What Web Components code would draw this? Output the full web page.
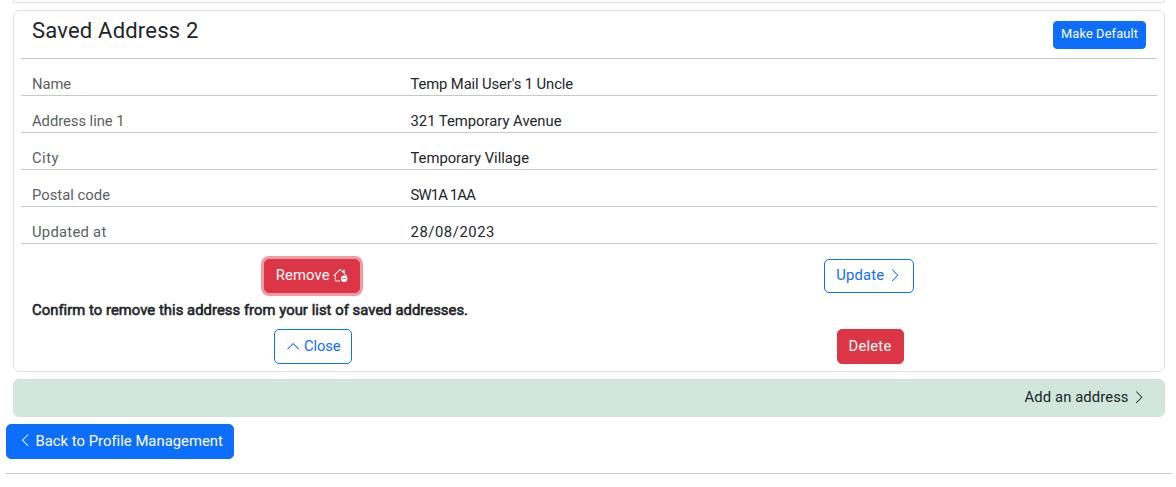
<!DOCTYPE html>
<html lang="en">
<head>
<meta charset="utf-8">
<title>Saved addresses</title>
<style>
body{margin:0;background:#fff;color:#212529;font:14.8px/22px Roboto,"Liberation Sans",sans-serif;overflow:hidden}
</style>
</head>
<body>
<address-page></address-page>
<script>
const define = (name, html, setup) => customElements.define(name, class extends HTMLElement {
  connectedCallback() {
    if (this.shadowRoot) return;
    this.attachShadow({mode: 'open'}).innerHTML = html;
    if (setup) setup(this, this.shadowRoot);
  }
});

// A label spaced out to a given measure in pixels.
define('fit-text', `<style>:host{display:inline-block;white-space:nowrap}span{display:inline-block}</style><span><slot></slot></span>`, (host, root) => {
  const span = root.querySelector('span');
  const measure = +host.getAttribute('measure');
  host.style.width = measure + 'px';
  span.style.letterSpacing = (measure - span.getBoundingClientRect().width) / host.textContent.length + 'px';
});

const ICONS = {
  right: '<path fill-rule="evenodd" d="M4.646 1.646a.5.5 0 0 1 .708 0l6 6a.5.5 0 0 1 0 .708l-6 6a.5.5 0 0 1-.708-.708L10.293 8 4.646 2.354a.5.5 0 0 1 0-.708z"/>',
  left: '<path fill-rule="evenodd" d="M11.354 1.646a.5.5 0 0 1 0 .708L5.707 8l5.647 5.646a.5.5 0 0 1-.708.708l-6-6a.5.5 0 0 1 0-.708l6-6a.5.5 0 0 1 .708 0z"/>',
  up: '<path fill-rule="evenodd" d="M7.646 4.646a.5.5 0 0 1 .708 0l6 6a.5.5 0 0 1-.708.708L8 5.707l-5.646 5.647a.5.5 0 0 1-.708-.708l6-6z"/>',
  house: '<circle cx="12.4" cy="12" r="3.6"/><path d="M11 11.7h2.8" stroke="#dc3545" stroke-width=".9" stroke-linecap="round"/><path d="M7.293 1.5a1 1 0 0 1 1.414 0L11 3.793V2.5a.5.5 0 0 1 .5-.5h1a.5.5 0 0 1 .5.5v3.293l2.354 2.353a.5.5 0 0 1-.708.708L8 2.207l-5 5V13.5a.5.5 0 0 0 .5.5h4a.5.5 0 0 1 0 1h-4A1.5 1.5 0 0 1 2 13.5V8.207l-.646.647a.5.5 0 1 1-.708-.708L7.293 1.5Z"/>'
};
define('line-icon', `<style>:host{display:block;width:14.4px;height:14.4px;flex:none}svg{display:block;width:100%;height:100%}</style><svg viewBox="0 0 16 16" fill="currentColor"></svg>`,
  (host, root) => { root.querySelector('svg').innerHTML = ICONS[host.getAttribute('name')]; });

define('action-button', `<style>
:host{display:inline-flex;box-sizing:border-box;height:35px;border:1px solid #0d6efd;border-radius:5px;background:#0d6efd;color:#fff;padding:5px 11px;align-items:flex-start;gap:4px}
:host([kind=outline]){background:#fff;color:#0d6efd}
:host([kind=danger]){background:#dc3545;border-color:#dc3545}
:host([focused]){box-shadow:0 0 0 3px rgba(225,83,97,.58)}
:host([small]){height:28px;padding:2px 7px 0;font-size:12.8px;line-height:20px;border-radius:4px}
::slotted(line-icon){margin-top:4px}
</style><slot></slot>`);

define('address-row', `<style>
:host{display:grid;grid-template-columns:378.5px 1fr;padding:14px 11px 0;border-bottom:1px solid #c6c7c8;height:22px}
.label{color:#5c6064}
</style><div class="label"><slot name="label"></slot></div><div><slot></slot></div>`);

define('address-card', `<style>
:host{display:block;box-sizing:border-box;border:1px solid #dee2e6;border-radius:6px;height:362px;padding:0 7px}
header{display:flex;justify-content:space-between;align-items:flex-start;height:47px;padding:0 11px;border-bottom:1px solid #c6c7c8}
.title{font-size:22px;line-height:26px;padding-top:7px}
header action-button{margin-top:10px}
.actions{display:grid;grid-template-columns:1fr 1fr;justify-items:center;padding:0 9px 0 13px}
.actions.first{padding:15px 9px 0 12px}
.first action-button{height:34px;padding-top:4px;gap:3.6px}
.second action-button{position:relative;left:.5px}
.confirm{padding:6px 11px 8px;-webkit-text-stroke:.6px currentColor}
</style>
<header><div class="title"><fit-text measure="166.5">Saved Address 2</fit-text></div>
<action-button small><fit-text measure="77">Make Default</fit-text></action-button></header>
<address-row><fit-text slot="label" measure="39">Name</fit-text><fit-text measure="162.5">Temp Mail User's 1 Uncle</fit-text></address-row>
<address-row><fit-text slot="label" measure="92.5">Address line 1</fit-text><fit-text measure="151">321 Temporary Avenue</fit-text></address-row>
<address-row><fit-text slot="label" measure="27">City</fit-text><fit-text measure="118.5">Temporary Village</fit-text></address-row>
<address-row><fit-text slot="label" measure="78">Postal code</fit-text><fit-text measure="64.5">SW1A 1AA</fit-text></address-row>
<address-row><fit-text slot="label" measure="74.5">Updated at</fit-text><fit-text measure="84.5">28/08/2023</fit-text></address-row>
<div class="actions first">
<action-button kind="danger" focused><fit-text measure="54">Remove</fit-text><line-icon name="house"></line-icon></action-button>
<action-button kind="outline"><fit-text measure="48">Update</fit-text><line-icon name="right"></line-icon></action-button>
</div>
<div class="confirm"><fit-text measure="435.5">Confirm to remove this address from your list of saved addresses.</fit-text></div>
<div class="actions second">
<action-button kind="outline"><line-icon name="up"></line-icon><fit-text measure="36.5">Close</fit-text></action-button>
<action-button kind="danger"><fit-text measure="43">Delete</fit-text></action-button>
</div>`);

define('add-bar', `<style>
:host{display:flex;box-sizing:border-box;height:38px;border:1px solid #d5dfe0;border-radius:6px;background:#d1e7dd;justify-content:flex-end;gap:3px;padding:6px 18px}
line-icon{margin-top:4px}
</style><fit-text measure="104">Add an address</fit-text><line-icon name="right"></line-icon>`);

define('address-page', `<style>
:host{display:flex;flex-direction:column;box-sizing:border-box;height:487px;padding:0 4px 0 6px}
.previous{box-sizing:border-box;height:3px;border:1px solid #dee2e6;border-top:0;border-radius:0 0 6px 6px;margin:0 7px 7px}
address-card,add-bar{margin:0 7px 7px}
action-button{align-self:flex-start;gap:3px}
action-button line-icon{margin-top:3px}
hr{width:100%;height:1px;border:0;background:#c6c7c8;margin:14px 0 0}
</style>
<div class="previous"></div>
<address-card></address-card>
<add-bar></add-bar>
<action-button><line-icon name="left"></line-icon><fit-text measure="187">Back to Profile Management</fit-text></action-button>
<hr>`);
</script>
</body>
</html>
